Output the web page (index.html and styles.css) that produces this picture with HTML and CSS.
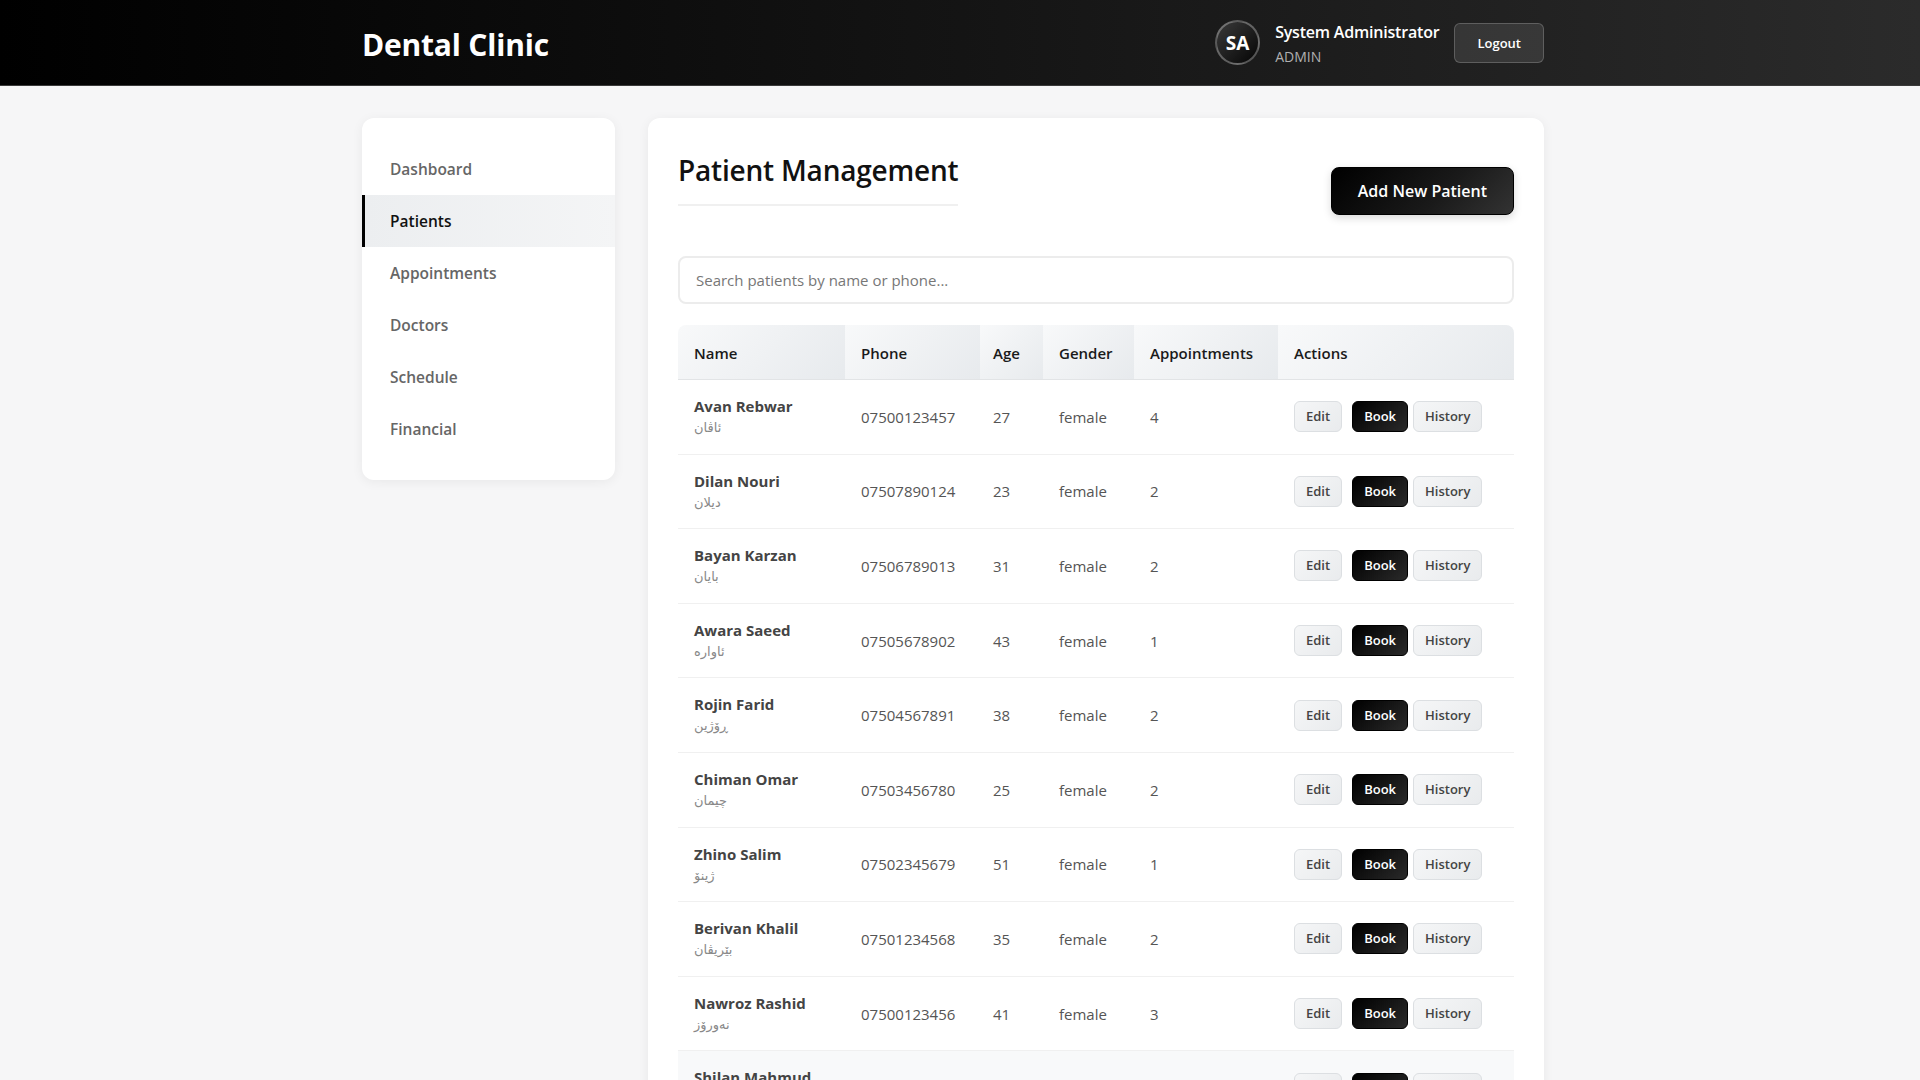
FILE: index.html
```html
<!DOCTYPE html>
<html lang="en">
<head>
    <meta charset="UTF-8">
    <meta name="viewport" content="width=device-width, initial-scale=1.0">
    <title>Dental Clinic - Patients</title>
    <link rel="stylesheet" href="styles.css">
</head>
<body>

    <header class="topbar">
        <div class="wrap topbar-inner">
            <h1 class="brand">Dental Clinic</h1>
            <div class="user-area">
                <div class="avatar">SA</div>
                <div class="user-info">
                    <div class="user-name">System Administrator</div>
                    <div class="user-role">ADMIN</div>
                </div>
                <button class="btn-logout">Logout</button>
            </div>
        </div>
    </header>

    <div class="wrap layout">
        <nav class="sidebar">
            <a class="nav-item" href="#">Dashboard</a>
            <a class="nav-item active" href="#">Patients</a>
            <a class="nav-item" href="#">Appointments</a>
            <a class="nav-item" href="#">Doctors</a>
            <a class="nav-item" href="#">Schedule</a>
            <a class="nav-item" href="#">Financial</a>
        </nav>

        <main class="card">
            <div class="card-head">
                <h2 class="page-title">Patient Management</h2>
                <button class="btn-primary">Add New Patient</button>
            </div>

            <input class="search" type="text" placeholder="Search patients by name or phone...">

            <div class="table-box">
                <table class="patients">
                    <colgroup>
                        <col class="c-name">
                        <col class="c-phone">
                        <col class="c-age">
                        <col class="c-gender">
                        <col class="c-appt">
                        <col class="c-actions">
                    </colgroup>
                    <thead>
                        <tr>
                            <th>Name</th>
                            <th>Phone</th>
                            <th>Age</th>
                            <th>Gender</th>
                            <th>Appointments</th>
                            <th>Actions</th>
                        </tr>
                    </thead>
                    <tbody>
                        <tr>
                            <td><div class="p-name">Avan Rebwar</div><div class="p-local">ئاڤان</div></td>
                            <td>07500123457</td><td>27</td><td>female</td><td>4</td>
                            <td class="actions"><button class="btn-sm">Edit</button><button class="btn-sm dark">Book</button><button class="btn-sm">History</button></td>
                        </tr>
                        <tr>
                            <td><div class="p-name">Dilan Nouri</div><div class="p-local">دیلان</div></td>
                            <td>07507890124</td><td>23</td><td>female</td><td>2</td>
                            <td class="actions"><button class="btn-sm">Edit</button><button class="btn-sm dark">Book</button><button class="btn-sm">History</button></td>
                        </tr>
                        <tr>
                            <td><div class="p-name">Bayan Karzan</div><div class="p-local">بایان</div></td>
                            <td>07506789013</td><td>31</td><td>female</td><td>2</td>
                            <td class="actions"><button class="btn-sm">Edit</button><button class="btn-sm dark">Book</button><button class="btn-sm">History</button></td>
                        </tr>
                        <tr>
                            <td><div class="p-name">Awara Saeed</div><div class="p-local">ئاوارە</div></td>
                            <td>07505678902</td><td>43</td><td>female</td><td>1</td>
                            <td class="actions"><button class="btn-sm">Edit</button><button class="btn-sm dark">Book</button><button class="btn-sm">History</button></td>
                        </tr>
                        <tr>
                            <td><div class="p-name">Rojin Farid</div><div class="p-local">ڕۆژین</div></td>
                            <td>07504567891</td><td>38</td><td>female</td><td>2</td>
                            <td class="actions"><button class="btn-sm">Edit</button><button class="btn-sm dark">Book</button><button class="btn-sm">History</button></td>
                        </tr>
                        <tr>
                            <td><div class="p-name">Chiman Omar</div><div class="p-local">چیمان</div></td>
                            <td>07503456780</td><td>25</td><td>female</td><td>2</td>
                            <td class="actions"><button class="btn-sm">Edit</button><button class="btn-sm dark">Book</button><button class="btn-sm">History</button></td>
                        </tr>
                        <tr>
                            <td><div class="p-name">Zhino Salim</div><div class="p-local">ژینۆ</div></td>
                            <td>07502345679</td><td>51</td><td>female</td><td>1</td>
                            <td class="actions"><button class="btn-sm">Edit</button><button class="btn-sm dark">Book</button><button class="btn-sm">History</button></td>
                        </tr>
                        <tr>
                            <td><div class="p-name">Berivan Khalil</div><div class="p-local">بێریڤان</div></td>
                            <td>07501234568</td><td>35</td><td>female</td><td>2</td>
                            <td class="actions"><button class="btn-sm">Edit</button><button class="btn-sm dark">Book</button><button class="btn-sm">History</button></td>
                        </tr>
                        <tr>
                            <td><div class="p-name">Nawroz Rashid</div><div class="p-local">نەورۆز</div></td>
                            <td>07500123456</td><td>41</td><td>female</td><td>3</td>
                            <td class="actions"><button class="btn-sm">Edit</button><button class="btn-sm dark">Book</button><button class="btn-sm">History</button></td>
                        </tr>
                        <tr class="hover">
                            <td><div class="p-name">Shilan Mahmud</div><div class="p-local">شیلان</div></td>
                            <td>07509876543</td><td>29</td><td>female</td><td>1</td>
                            <td class="actions"><button class="btn-sm">Edit</button><button class="btn-sm dark">Book</button><button class="btn-sm">History</button></td>
                        </tr>
                    </tbody>
                </table>
            </div>
        </main>
    </div>

</body>
</html>
```

FILE: styles.css
```css
* {
    margin: 0;
    padding: 0;
    box-sizing: border-box;
}
body {
    font-family: "Open Sans", "DejaVu Sans", sans-serif;
    background-color: #f6f6f7;
    color: #333;
}
.wrap {
    width: 1182px;
    margin-left: calc(50% - 598px);
}

/* top bar */
.topbar {
    height: 86px;
    background: linear-gradient(90deg, #000 0%, #141414 50%, #2b2b2b 100%);
    border-bottom: 1px solid #3a3a3a;
}
.topbar-inner {
    height: 100%;
    display: flex;
    justify-content: space-between;
    align-items: center;
}
.brand {
    color: #fff;
    font-size: 30px;
    font-weight: 700;
    letter-spacing: -0.2px;
    margin-top: 4px;
}
.user-area {
    display: flex;
    align-items: center;
}
.avatar {
    width: 45px;
    height: 45px;
    border-radius: 50%;
    background: linear-gradient(135deg, #3a3a3a, #050505);
    border: 2px solid rgba(255, 255, 255, 0.3);
    color: #fff;
    font-weight: 700;
    font-size: 19px;
    display: flex;
    align-items: center;
    justify-content: center;
    margin-right: 15px;
}
.user-info {
    margin-right: 15px;
    margin-top: 3px;
}
.user-name {
    color: #fff;
    font-size: 16px;
    font-weight: 600;
    line-height: 22px;
    letter-spacing: -0.2px;
}
.user-role {
    color: #b0b0b0;
    font-size: 14px;
    line-height: 22px;
    margin-top: 3px;
}
.btn-logout {
    font-family: inherit;
    font-size: 13px;
    font-weight: 600;
    color: #fff;
    background: rgba(255, 255, 255, 0.1);
    border: 1px solid rgba(255, 255, 255, 0.2);
    border-radius: 6px;
    padding: 10px 22px;
    line-height: 18px;
}

/* layout */
.layout {
    display: flex;
    align-items: flex-start;
    gap: 33px;
    margin-top: 32px;
}
.sidebar {
    width: 253px;
    flex-shrink: 0;
    background: #fff;
    border-radius: 12px;
    box-shadow: 0 2px 12px rgba(0, 0, 0, 0.06);
    padding: 25px 0;
}
.nav-item {
    display: block;
    padding: 15px 25px;
    border-left: 3px solid transparent;
    color: #666;
    font-size: 15.5px;
    font-weight: 600;
    line-height: 22px;
    text-decoration: none;
}
.nav-item.active {
    border-left-color: #000;
    color: #111;
    background: linear-gradient(90deg, #eceef0, #f4f5f6);
}

/* main card */
.card {
    flex: 1;
    background: #fff;
    border-radius: 12px;
    box-shadow: 0 2px 12px rgba(0, 0, 0, 0.06);
    padding: 30px;
}
.card-head {
    display: flex;
    justify-content: space-between;
    align-items: center;
    margin-bottom: 22px;
}
.page-title {
    font-size: 28px;
    font-weight: 600;
    color: #111;
    line-height: 44px;
    padding-bottom: 12px;
    border-bottom: 2px solid #f0f0f0;
    margin-bottom: 28px;
    letter-spacing: -0.2px;
}
.btn-primary {
    font-family: inherit;
    font-size: 16px;
    font-weight: 600;
    color: #fff;
    background: linear-gradient(135deg, #000 0%, #1a1a1a 60%, #333 100%);
    border: 1px solid #000;
    border-radius: 8px;
    padding: 13px 26px;
    line-height: 20px;
    box-shadow: 0 3px 8px rgba(0, 0, 0, 0.15);
}
.search {
    display: block;
    width: 100%;
    height: 48px;
    padding: 0 16px;
    border: 2px solid #ececec;
    border-radius: 8px;
    font-family: inherit;
    font-size: 15px;
    color: #333;
    outline: none;
}
.search::placeholder {
    color: #777;
}

/* table */
.table-box {
    margin-top: 21px;
    border-radius: 8px;
    overflow: hidden;
}
.patients {
    width: 100%;
    border-collapse: collapse;
    table-layout: fixed;
}
.c-name { width: 167px; }
.c-phone { width: 135px; }
.c-age { width: 63px; }
.c-gender { width: 91px; }
.c-appt { width: 144px; }
.patients th {
    text-align: left;
    padding: 18px 16px 16px 16px;
    font-size: 15px;
    font-weight: 600;
    color: #1a1a1a;
    line-height: 20px;
    background: linear-gradient(135deg, #f8f9fa 0%, #e7eaed 100%);
    border-bottom: 1px solid #e2e4e6;
}
.patients th:nth-child(3) {
    padding-left: 13px;
}
.patients td {
    padding: 15px 16px;
    font-size: 15px;
    color: #555;
    vertical-align: middle;
    border-bottom: 1px solid #f0f0f0;
}
.patients td:nth-child(3) {
    padding-left: 13px;
}
.p-name {
    font-weight: 700;
    color: #444;
    line-height: 22px;
}
.p-local {
    font-size: 13px;
    color: #888;
    line-height: 21.6px;
}
.patients tr.hover td {
    background: #f8f9fa;
}
.actions {
    white-space: nowrap;
}
.btn-sm {
    font-family: inherit;
    font-size: 13px;
    font-weight: 600;
    color: #444;
    background: linear-gradient(135deg, #f5f6f7, #e9ebed);
    border: 1px solid #dcdfe2;
    border-radius: 6px;
    padding: 6px 11px;
    line-height: 17px;
    margin-right: 5px;
}
.btn-sm:first-child {
    margin-right: 10px;
}
.btn-sm.dark {
    color: #fff;
    background: linear-gradient(135deg, #000, #2a2a2a);
    border-color: #000;
}
```
